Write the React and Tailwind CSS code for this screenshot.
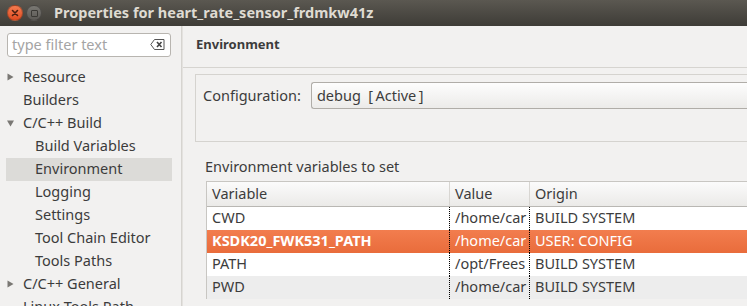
const font = { fontFamily: '"Noto Sans", "Open Sans", sans-serif' };

const tree = [
  { label: 'Resource', arrow: 'right', depth: 0 },
  { label: 'Builders', depth: 0 },
  { label: 'C/C++ Build', arrow: 'down', depth: 0 },
  { label: 'Build Variables', depth: 1 },
  { label: 'Environment', depth: 1, selected: true },
  { label: 'Logging', depth: 1 },
  { label: 'Settings', depth: 1 },
  { label: 'Tool Chain Editor', depth: 1 },
  { label: 'Tools Paths', depth: 1 },
  { label: 'C/C++ General', arrow: 'right', depth: 0 },
  { label: 'Linux Tools Path', depth: 0 },
];

const rows = [
  { name: 'CWD', value: '/home/car', origin: 'BUILD SYSTEM' },
  { name: 'KSDK20_FWK531_PATH', value: '/home/car', origin: 'USER: CONFIG', selected: true },
  { name: 'PATH', value: '/opt/Frees', origin: 'BUILD SYSTEM' },
  { name: 'PWD', value: '/home/car', origin: 'BUILD SYSTEM', alt: true },
];

function Arrow({ dir }) {
  return (
    <svg width="7" height="8" viewBox="0 0 7 8" className="shrink-0">
      {dir === 'right' ? (
        <path d="M0.5 0.5 L6.5 4 L0.5 7.5 Z" fill="#7a7874" />
      ) : (
        <path d="M0 1.5 L7 1.5 L3.5 7.5 Z" fill="#7a7874" />
      )}
    </svg>
  );
}

export default function App() {
  return (
    <div className="w-[747px] h-[306px] overflow-hidden bg-[#f2f1f0] flex flex-col text-[#3c3c3c]" style={font}>
      {/* Title bar */}
      <div className="h-[26px] shrink-0 flex items-center bg-gradient-to-b from-[#5b5851] to-[#3e3c37]">
        <div className="ml-[7px] w-[16px] h-[16px] rounded-full bg-gradient-to-b from-[#f57b4f] to-[#df4a1f] border border-[#4a2a1c]/40 flex items-center justify-center">
          <svg width="8" height="8" viewBox="0 0 8 8">
            <path d="M1.5 1.5 L6.5 6.5 M6.5 1.5 L1.5 6.5" stroke="#4b1f10" strokeWidth="1.6" strokeLinecap="round" />
          </svg>
        </div>
        <div className="ml-[3px] w-[16px] h-[16px] rounded-full bg-gradient-to-b from-[#7a7873] to-[#5b5955] border border-[#2f2e2b]/50 flex items-center justify-center">
          <div className="w-[7px] h-[7px] border border-[#3a3935] rounded-[1px]" />
        </div>
        <div className="ml-[12px] text-[14.5px] font-bold text-[#dfdbd2]">
          Properties for heart_rate_sensor_frdmkw41z
        </div>
      </div>

      <div className="flex flex-1 min-h-0">
        {/* Left tree */}
        <div className="w-[182px] shrink-0 border-r border-[#d6d4d0] flex flex-col">
          <div className="mt-[7px] ml-[7px] w-[164px] h-[26px] rounded-[3px] border border-[#b8b5b0] bg-white flex items-center justify-between pl-[4px] pr-[5px]">
            <span className="text-[14.5px] text-[#a4a4a4]">type filter text</span>
            <svg width="15" height="11" viewBox="0 0 15 11">
              <path d="M4.5 0.5 H14 V10.5 H4.5 L0.8 5.5 Z" fill="none" stroke="#555" strokeWidth="1" />
              <path d="M7 3 L11.5 8 M11.5 3 L7 8" stroke="#444" strokeWidth="1.6" />
            </svg>
          </div>
          <div className="mt-[9px] flex flex-col">
            {tree.map((t) => (
              <div
                key={t.label}
                className={`h-[23px] shrink-0 flex items-center text-[14.5px] ml-[6px] w-[166px] ${
                  t.selected ? 'bg-[#dcdbd8]' : ''
                }`}
              >
                <div className="w-[17px] flex pl-[1px]">{t.arrow && <Arrow dir={t.arrow} />}</div>
                <span className={`${t.depth ? 'ml-[12px]' : ''} whitespace-nowrap`}>{t.label}</span>
              </div>
            ))}
          </div>
        </div>

        {/* Right page */}
        <div className="flex-1 min-w-0 flex flex-col border-l border-[#e4e2df]">
          <div className="h-[42px] shrink-0 border-b border-[#d6d4d0] flex items-center pl-[13px] pb-[3px]">
            <span className="text-[13px] font-bold text-[#3c3c3c]">Environment</span>
          </div>
          <div className="pl-[12px] pt-[6px]">
            <div className="h-[68px] border border-[#d5d3cf] border-r-0 flex items-start pt-[7px] pl-[7px]">
              <span className="text-[14.5px] mt-[3px] whitespace-nowrap">Configuration:</span>
              <div className="ml-[10px] flex-1 h-[27px] rounded-l-[3px] border border-r-0 border-[#b0ada8] bg-gradient-to-b from-[#fdfdfd] to-[#ecebe9] flex items-center pl-[5px] text-[14.5px] whitespace-nowrap">
                debug&nbsp;&nbsp;[&thinsp;Active&thinsp;]
              </div>
            </div>
            <div className="mt-[14px] pl-[10px] text-[14.5px] whitespace-nowrap">Environment variables to set</div>
            <div className="mt-[3px] ml-[11px] border-l border-t border-[#c8c6c2] bg-white">
              <div className="grid grid-cols-[243px_80px_1fr] h-[25px] bg-gradient-to-b from-[#fbfbfb] to-[#ebeae8] border-b border-[#b9b7b3] text-[14.5px]">
                <div className="pl-[5px] flex items-center border-r border-[#d8d6d2]">Variable</div>
                <div className="pl-[5px] flex items-center border-r border-[#d8d6d2]">Value</div>
                <div className="pl-[5px] flex items-center">Origin</div>
              </div>
              {rows.map((r) => (
                <div
                  key={r.name}
                  className={`grid grid-cols-[243px_80px_1fr] h-[23px] text-[14.5px] whitespace-nowrap ${
                    r.selected
                      ? 'bg-gradient-to-b from-[#f27d4e] to-[#e96c3b] text-white'
                      : r.alt
                      ? 'bg-[#ededed]'
                      : 'bg-white'
                  }`}
                >
                  <div className={`pl-[5px] flex items-center border-r border-dotted border-black ${r.selected ? 'font-bold' : ''}`}>
                    {r.name}
                  </div>
                  <div className="pl-[5px] flex items-center overflow-hidden border-r border-dotted border-black">{r.value}</div>
                  <div className="pl-[5px] flex items-center">{r.origin}</div>
                </div>
              ))}
            </div>
          </div>
        </div>
      </div>
    </div>
  );
}
